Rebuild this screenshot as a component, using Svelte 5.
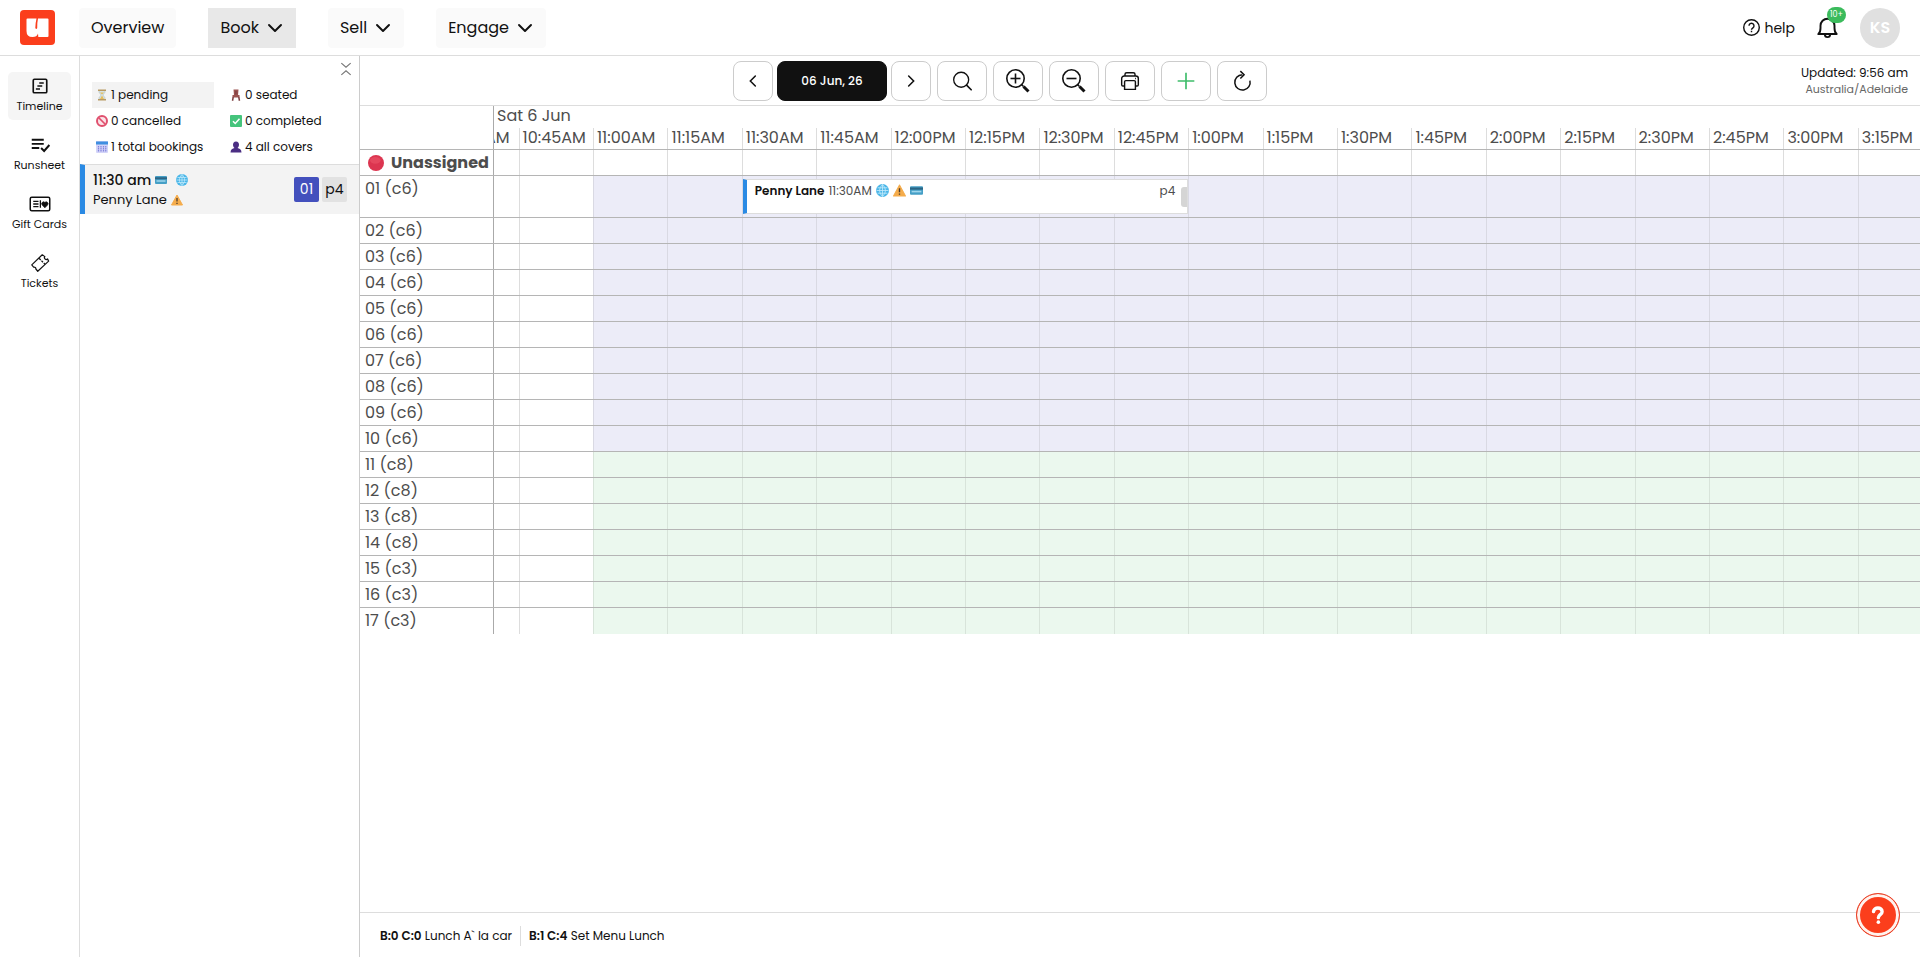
<script>
	const tabs = [
		{ name: 'Overview' },
		{ name: 'Book', menu: true, active: true },
		{ name: 'Sell', menu: true },
		{ name: 'Engage', menu: true }
	];

	const sideLinks = [
		{ name: 'Timeline', icon: 'timeline', active: true },
		{ name: 'Runsheet', icon: 'runsheet' },
		{ name: 'Gift Cards', icon: 'gift' },
		{ name: 'Tickets', icon: 'ticket' }
	];

	const stats = [
		{ icon: 'hourglass', text: '1 pending', active: true },
		{ icon: 'chair', text: '0 seated' },
		{ icon: 'cancelled', text: '0 cancelled' },
		{ icon: 'completed', text: '0 completed' },
		{ icon: 'calendar', text: '1 total bookings' },
		{ icon: 'person', text: '4 all covers' }
	];

	const tools = [
		{ name: 'Search', icon: 'search' },
		{ name: 'Zoom in', icon: 'zoomin' },
		{ name: 'Zoom out', icon: 'zoomout' },
		{ name: 'Print', icon: 'print' },
		{ name: 'Add booking', icon: 'add' },
		{ name: 'Refresh', icon: 'refresh' }
	];

	// Quarter-hour slots; the first one is scrolled half out of view.
	const slots = Array.from({ length: 20 }, (_, i) => {
		const minutes = 10 * 60 + 30 + i * 15;
		const hour = Math.floor(minutes / 60);
		const label = `${hour > 12 ? hour - 12 : hour}:${String(minutes % 60).padStart(2, '0')}`;
		return label + (hour < 12 ? 'AM' : 'PM');
	});

	const tables = Array.from({ length: 17 }, (_, i) => {
		const n = i + 1;
		return {
			name: String(n).padStart(2, '0'),
			covers: n <= 10 ? 6 : n <= 14 ? 8 : 3,
			area: n <= 10 ? 'lunch' : 'garden',
			booking: n === 1
		};
	});

	const services = [
		{ count: 'B:0 C:0', name: 'Lunch A` la car' },
		{ count: 'B:1 C:4', name: 'Set Menu Lunch' }
	];
</script>

{#snippet icon(name, size)}
	<svg class="icon" width={size} height={size} viewBox="0 0 24 24" fill="none" stroke="currentColor" stroke-width="2" aria-hidden="true">
		{#if name === 'timeline'}
			<rect x="3" y="3" width="18" height="18" rx="1.500" stroke-width="2.200" />
			<path d="M11 8h6M8.500 12h6.500M6.500 16h5.500" stroke-width="2.200" />
		{:else if name === 'runsheet'}
			<path d="M1 5h16M1 10.500h16M1 16h10M13.500 16l4 4 7-8" stroke-width="2.600" />
		{:else if name === 'gift'}
			<rect x="-1" y="3" width="26" height="18" rx="2" stroke-width="2" />
			<path d="M3 8.500h7M3 12h7M3 15.500h7M12.500 7v10" stroke-width="1.700" />
			<path d="M18.500 17l-3.500-3.600a2.300 2.300 0 0 1 3.500-3.500 2.300 2.300 0 0 1 3.500 3.500z" fill="currentColor" stroke="currentColor" stroke-width="1" />
		{:else if name === 'ticket'}
			<path d="M1 14.500L15 1l3.500 2.500a2 2 0 0 0 3.500 3l1.500 3L9 23l-2.500-3a2.300 2.300 0 0 0-3-2.500zM11 6l2 2M14 9l2 2M17 12l1.500 1.500" stroke-width="1.600" stroke-linejoin="round" />
		{:else if name === 'chevron'}
			<path d="M4 8l8 8 8-8" stroke-width="2.600" stroke-linecap="round" stroke-linejoin="round" />
		{:else if name === 'prev'}
			<path d="M15.500 4.500l-7.500 7.500 7.500 7.500" stroke-width="2.300" stroke-linecap="round" />
		{:else if name === 'next'}
			<path d="M8.500 4.500l7.500 7.500-7.500 7.500" stroke-width="2.300" stroke-linecap="round" />
		{:else if name === 'collapse'}
			<path d="M4 2l8 7 8-7M4 22l8-7 8 7" stroke-width="2" />
		{:else if name === 'search'}
			<circle cx="11" cy="10.500" r="9" stroke-width="1.600" />
			<path d="M17.500 17l5.500 5.500" stroke-width="2" stroke-linecap="round" />
		{:else if name === 'zoomin' || name === 'zoomout'}
			<circle cx="9.500" cy="9.500" r="8.700" stroke-width="1.600" />
			<path d="M4.500 9.500h10" stroke-width="1.600" />
			{#if name === 'zoomin'}<path d="M9.500 4.500v10" stroke-width="1.600" />{/if}
			<path d="M15.500 15.500l2 2" stroke-width="1.600" />
			<path d="M17.500 17.500l5 5" stroke-width="3" />
		{:else if name === 'print'}
			<path d="M6 6V4a2 2 0 0 1 2-2h8a2 2 0 0 1 2 2v2M5 18H3.500A1.500 1.500 0 0 1 2 16.500V9a3 3 0 0 1 3-3h14a3 3 0 0 1 3 3v7.500a1.500 1.500 0 0 1-1.500 1.500H19M7 11.500h10a1.500 1.500 0 0 1 1.500 1.500v9h-13v-9A1.500 1.500 0 0 1 7 11.500zM18 9h1" stroke-width="1.700" />
		{:else if name === 'add'}
			<path d="M12 2v20M2 12h20" stroke-width="2" />
		{:else if name === 'refresh'}
			<path d="M21.500 11.500a9.200 9.200 0 1 1-9.200-7M10 .2l4.500 4.300-4.500 4.500" stroke-width="1.800" />
		{:else if name === 'bell'}
			<path d="M1.500 19.500h21c-2-1.500-2.500-3-2.500-7V10a8 8 0 0 0-16 0v2.500c0 4-.5 5.500-2.500 7zM9 20a3 3 0 0 0 6 0" stroke-width="2.200" stroke-linejoin="round" />
		{:else if name === 'help'}
			<circle cx="12" cy="12" r="11" stroke-width="2" />
			<path d="M8.500 9.500a3.500 3.500 0 1 1 5.500 3c-1.500 1-2 1.400-2 2.500M12 16.500v2.200" stroke-width="2" />
		{:else if name === 'question'}
			<path d="M6 7.500C6.500 1 17.500 1 17.500 7.500c0 4-5 4-5 8" stroke-width="4.500" stroke-linecap="round" />
			<circle cx="12.500" cy="21.500" r="2.400" fill="currentColor" stroke="none" />
		{:else if name === 'hourglass'}
			<path d="M6 3h12v3c0 3-4 4-4 6s4 3 4 6v3H6v-3c0-3 4-4 4-6S6 9 6 6z" fill="#d5e3e4" stroke="#a9b7b4" stroke-width="1" />
			<path d="M8 7h8l-4 4zM12 13l4 7H8z" fill="#e6bd5c" stroke="none" />
			<path d="M4 2.500h16M4 21.500h16" stroke="#b89a63" stroke-width="3" />
		{:else if name === 'chair'}
			<path d="M7 1h10l-1 12H8zM5 12h14v5H5z" fill="#9b5350" stroke="none" />
			<path d="M6.500 16L5 23.500M17.500 16L19 23.500" stroke="#7c3f40" stroke-width="3" />
			<path d="M11 4v7M13.500 4v7" stroke="#6f3639" stroke-width="1" />
		{:else if name === 'cancelled'}
			<circle cx="12" cy="12" r="10" fill="#fbe3e8" stroke="#e0506e" stroke-width="4" />
			<path d="M5.500 5.500l13 13" stroke="#e0506e" stroke-width="3.500" />
		{:else if name === 'completed'}
			<rect width="24" height="24" rx="2" fill="#45c47c" stroke="none" />
			<path d="M6 12.500l4.500 4.500L19 7.500" stroke="#fff" stroke-width="3" />
		{:else if name === 'calendar'}
			<rect width="24" height="24" rx="2" fill="#d3d4f8" stroke="none" />
			<path d="M0 1h24v6H0z" fill="#3f8fe0" stroke="none" />
			<path d="M5 10v11M10 10v11M15 10v11M19.500 10v11" stroke="#8384dc" stroke-width="2.500" stroke-dasharray="2.800 1.300" />
		{:else if name === 'person'}
			<path d="M12 1c4 0 6 3 6 6.500 0 3-1.500 5-3 6.500 4 1 8 3 8 9H1c0-6 4-8 8-9-1.500-1.500-3-3.500-3-6.500C6 4 8 1 12 1z" fill="#4b2e83" stroke="none" />
		{:else if name === 'card'}
			<rect y="4" width="24" height="16" rx="2" fill="#459fc6" stroke="none" />
			<path d="M0 8.500h24" stroke="#2b6585" stroke-width="4" />
			<path d="M3 14h18" stroke="#9fd6ec" stroke-width="3" />
		{:else if name === 'globe'}
			<circle cx="12" cy="12" r="12" fill="#4ab6e8" stroke="none" />
			<path d="M1 12h22M3 7h18M3 17h18M12 1v22M12 1c-7 7-7 15 0 22M12 1c7 7 7 15 0 22" stroke="#c4ebfb" stroke-width="1.500" />
		{:else if name === 'warning'}
			<path d="M12 2l11 20H1z" fill="#f5ac4b" stroke="#f5ac4b" stroke-width="2" stroke-linejoin="round" />
			<path d="M12 8v7M12 17.500v2.500" stroke="#4b3a2d" stroke-width="2.500" />
		{:else if name === 'dot'}
			<circle cx="12" cy="12" r="12" fill="#dc3550" stroke="none" />
			<ellipse cx="11" cy="8" rx="8" ry="5" fill="#e5475e" stroke="none" />
		{/if}
	</svg>
{/snippet}

<div class="app">
	<header class="topbar">
		<a class="logo" href="#home" aria-label="Home">
			<svg width="35" height="35" viewBox="0 0 35 35" aria-hidden="true">
				<rect width="35" height="35" rx="4" fill="#fb3e1c" />
				<path d="M7.500 8.500h9q-1 4-1.200 9.500 1 1.800 1.900 0Q17.200 12 18 8.500h9.500q1 0 1 1V26q0 1-1 1h-9.200l-.3-3.500Q17 27 12.500 27 6.500 27 6.500 21V9.500q0-1 1-1z" fill="#fff" />
			</svg>
		</a>
		<nav class="tabs">
			{#each tabs as tab}
				<button class="tab" class:active={tab.active}>
					{tab.name}
					{#if tab.menu}{@render icon('chevron', 18)}{/if}
				</button>
			{/each}
		</nav>
		<div class="account">
			<a class="help" href="#help">{@render icon('help', 17)}help</a>
			<button class="bell" aria-label="Notifications">
				{@render icon('bell', 21)}
				<span class="count">10+</span>
			</button>
			<button class="avatar">KS</button>
		</div>
	</header>

	<div class="body">
		<nav class="side">
			{#each sideLinks as link}
				<a href="#{link.icon}" class:active={link.active}>
					{@render icon(link.icon, 18)}
					{link.name}
				</a>
			{/each}
		</nav>

		<aside class="bookings">
			<button class="collapse" aria-label="Collapse">{@render icon('collapse', 14)}</button>
			<div class="stats">
				{#each stats as stat}
					<button class="stat" class:active={stat.active}>{@render icon(stat.icon, 12)}{stat.text}</button>
				{/each}
			</div>
			<article class="booking">
				<div class="who">
					<div class="when">11:30 am {@render icon('card', 12)} {@render icon('globe', 12)}</div>
					<div class="name">Penny Lane {@render icon('warning', 12)}</div>
				</div>
				<span class="table-no">01</span>
				<span class="party">p4</span>
			</article>
		</aside>

		<main class="main">
			<div class="toolbar">
				<div class="tools">
					<div class="dates">
						<button class="tool step" aria-label="Previous day">{@render icon('prev', 16)}</button>
						<button class="tool date">06 Jun, 26</button>
						<button class="tool step" aria-label="Next day">{@render icon('next', 16)}</button>
					</div>
					{#each tools as tool}
						<button class="tool {tool.icon}" aria-label={tool.name}>
							{@render icon(tool.icon, tool.icon.startsWith('zoom') ? 24 : 20)}
						</button>
					{/each}
				</div>
				<div class="updated">
					<div>Updated: 9:56 am</div>
					<div class="zone">Australia/Adelaide</div>
				</div>
			</div>

			<div class="timeline">
				<div class="row head">
					<div class="label"></div>
					<div class="times">
						<div class="day">Sat 6 Jun</div>
						<div class="slots">
							{#each slots as slot, i}
								<div class="slot" class:cut={i === 0}>{slot}</div>
							{/each}
						</div>
					</div>
				</div>
				<div class="row">
					<div class="label unassigned">{@render icon('dot', 16)}Unassigned</div>
					<div class="slots">
						{#each slots as _}<div class="slot"></div>{/each}
					</div>
				</div>
				{#each tables as table}
					<div class="row" class:booked={table.booking}>
						<div class="label">{table.name} (c{table.covers})</div>
						<div class="slots">
							{#each slots as _, i}
								<div
									class="slot"
									class:lunch={i > 1 && table.area === 'lunch'}
									class:garden={i > 1 && table.area === 'garden'}
									style:grid-column={i + 1}
								></div>
							{/each}
							{#if table.booking}
								<div class="event">
									<strong>Penny Lane</strong>
									<span>11:30AM</span>
									{@render icon('globe', 13)}
									{@render icon('warning', 13)}
									{@render icon('card', 13)}
									<span class="size">p4</span>
									<i class="grip"></i>
								</div>
							{/if}
						</div>
					</div>
				{/each}
			</div>

			<footer class="services">
				{#each services as service}
					<div class="service"><b>{service.count}</b> {service.name}</div>
				{/each}
			</footer>
		</main>
	</div>

	<button class="support" aria-label="Support">{@render icon('question', 18)}</button>
</div>

<style>
	:global(body) {
		background: #fff;
	}

	.app {
		display: flex;
		flex-direction: column;
		min-height: 100vh;
		color: #111;
		font: 13px/20px Poppins, Inter, 'Liberation Sans', sans-serif;
	}

	.app * {
		box-sizing: border-box;
	}

	button {
		border: 0;
		padding: 0;
		background: none;
		color: inherit;
		font: inherit;
		cursor: pointer;
	}

	a {
		color: inherit;
		text-decoration: none;
	}

	.icon {
		flex: none;
		overflow: visible;
	}

	/* Header */
	.topbar {
		display: flex;
		align-items: center;
		height: 56px;
		padding: 0 20px;
		border-bottom: 1px solid #ddd;
	}

	.logo {
		display: flex;
		margin-right: 24px;
	}

	.tabs {
		display: flex;
		gap: 32px;
	}

	.tab {
		display: flex;
		align-items: center;
		gap: 7px;
		height: 40px;
		padding: 0 12px;
		border-radius: 4px;
		background: #fafafa;
		font-size: 16px;
	}

	.tab.active {
		border-radius: 0;
		background: #e8e8e8;
	}

	.account {
		display: flex;
		align-items: center;
		gap: 22px;
		margin-left: auto;
	}

	.help {
		display: flex;
		align-items: center;
		gap: 4px;
		font-size: 14px;
	}

	.bell {
		position: relative;
		display: flex;
	}

	.count {
		position: absolute;
		top: -10px;
		left: 10px;
		padding: 0 3px;
		border-radius: 8px;
		background: #3bbb5c;
		color: #fff;
		font-size: 8px;
		line-height: 16px;
	}

	.avatar {
		width: 40px;
		height: 40px;
		border-radius: 50%;
		background: #e0e0e0;
		color: #fff;
		font-size: 16px;
		font-weight: 600;
	}

	.body {
		display: flex;
		flex: 1;
	}

	/* Left navigation */
	.side {
		display: flex;
		flex-direction: column;
		gap: 11px;
		width: 80px;
		padding: 16px 8px;
		border-right: 1px solid #ddd;
	}

	.side a {
		display: flex;
		flex-direction: column;
		align-items: center;
		justify-content: center;
		gap: 2px;
		height: 48px;
		border-radius: 5px;
		font-size: 11px;
		line-height: 18px;
		white-space: nowrap;
	}

	.side a.active {
		background: #f5f5f5;
	}

	/* Booking list */
	.bookings {
		display: flex;
		flex-direction: column;
		width: 280px;
		border-right: 1px solid #ccc;
	}

	.collapse {
		display: flex;
		align-self: flex-end;
		margin: 6px 6px;
		color: #777;
	}

	.stats {
		display: grid;
		grid-template-columns: 122px 122px;
		column-gap: 12px;
		padding: 0 12px 4px;
	}

	.stat {
		display: flex;
		align-items: center;
		gap: 3px;
		height: 26px;
		padding-left: 4px;
		font-size: 12px;
		white-space: nowrap;
	}

	.stat.active {
		background: #f3f3f3;
	}

	.booking {
		display: flex;
		align-items: center;
		gap: 3px;
		height: 50px;
		padding: 0 12px 0 8px;
		border-top: 1px solid #ddd;
		border-left: 5px solid #2a8ae4;
		background: #f3f3f3;
	}

	.who {
		flex: 1;
	}

	.when,
	.name {
		display: flex;
		align-items: center;
		gap: 4px;
	}

	.when {
		font-size: 14px;
		font-weight: 500;
	}

	.when .icon + :global(.icon) {
		margin-left: 5px;
	}

	.table-no,
	.party {
		width: 25px;
		border-radius: 2px;
		background: #e2e2e2;
		font-size: 14px;
		line-height: 25px;
		text-align: center;
	}

	.table-no {
		background: #4350bd;
		color: #fff;
	}

	/* Toolbar */
	.main {
		display: flex;
		flex: 1;
		flex-direction: column;
		min-width: 0;
	}

	.toolbar {
		display: flex;
		align-items: center;
		height: 50px;
		border-bottom: 1px solid #ddd;
	}

	.tools {
		display: flex;
		flex: 1;
		justify-content: center;
		gap: 6px;
	}

	.dates {
		display: flex;
		gap: 4px;
	}

	.tool {
		display: flex;
		align-items: center;
		justify-content: center;
		width: 50px;
		height: 40px;
		border: 1px solid #ccc;
		border-radius: 8px;
	}

	.tool.step {
		width: 40px;
	}

	.tool.date {
		width: 110px;
		border-color: #111;
		background: #111;
		color: #fff;
		font-size: 12px;
		font-weight: 500;
	}

	.tool.add {
		color: #3fbd6b;
	}

	.updated {
		width: 280px;
		padding-right: 12px;
		font-size: 12px;
		line-height: 17px;
		text-align: right;
	}

	.zone {
		color: #666;
		font-size: 11px;
	}

	/* Timeline */
	.timeline {
		flex: 1;
		color: #4d4d4d;
		font-size: 16px;
		line-height: 25px;
	}

	.row {
		display: flex;
		height: 26px;
		border-bottom: 1px solid #b5b5b5;
	}

	.row:last-child {
		border-bottom: 0;
	}

	.row.head {
		height: 44px;
	}

	.row.booked {
		height: 42px;
	}

	.label {
		flex: none;
		width: 134px;
		padding-left: 5px;
		border-right: 1px solid #aaa;
		white-space: nowrap;
	}

	.unassigned {
		display: flex;
		align-items: center;
		gap: 7px;
		padding-left: 8px;
		font-weight: 700;
	}

	.times {
		display: flex;
		flex: 1;
		flex-direction: column;
		min-width: 0;
		overflow: hidden;
	}

	.day {
		height: 22px;
		padding-left: 3px;
		line-height: 20px;
	}

	.slots {
		display: grid;
		flex: 1;
		grid-template-columns: 123fr repeat(18, 372fr) 311fr;
		grid-template-rows: 100%;
		min-width: 0;
	}

	.slot {
		grid-row: 1;
		min-width: 0;
		border-left: 1px solid #ddd;
	}

	.slot:first-child {
		border-left: 0;
	}

	.head .slot {
		padding-left: 3px;
		line-height: 20px;
		white-space: nowrap;
	}

	.head .cut {
		display: flex;
		justify-content: flex-end;
		padding-right: 9px;
	}

	.lunch {
		border-color: #d9d9e3;
		background: #ececf8;
	}

	.garden {
		border-color: #d8e4da;
		background: #ebf8ee;
	}

	.event {
		position: relative;
		display: flex;
		grid-row: 1;
		grid-column: 5 / 11;
		align-items: center;
		gap: 4px;
		margin: 3px 0 3px 1px;
		padding: 0 12px 12px 8px;
		border: 1px solid #ddd;
		border-left: 4px solid #2a8ae4;
		background: #fff;
		font-size: 12px;
		line-height: 20px;
	}

	.event strong {
		color: #111;
		font-weight: 600;
	}

	.size {
		margin-left: auto;
	}

	.grip {
		position: absolute;
		top: 7px;
		right: 0;
		width: 6px;
		height: 20px;
		border-radius: 3px 0 0 3px;
		background: #d5d5d5;
	}

	/* Footer */
	.services {
		display: flex;
		align-items: center;
		height: 45px;
		padding: 2px 0 0 20px;
		border-top: 1px solid #ddd;
		font-size: 12px;
	}

	.service + .service {
		margin-left: 8px;
		padding-left: 8px;
		border-left: 1px solid #ddd;
	}

	.service b {
		font-weight: 600;
	}

	.support {
		position: fixed;
		right: 20px;
		bottom: 20px;
		display: flex;
		align-items: center;
		justify-content: center;
		width: 44px;
		height: 44px;
		border: 1px solid #e8432a;
		border-radius: 50%;
		background: #fb3e1c;
		box-shadow: inset 0 0 0 3px #fff3ee;
		color: #fff;
	}
</style>
